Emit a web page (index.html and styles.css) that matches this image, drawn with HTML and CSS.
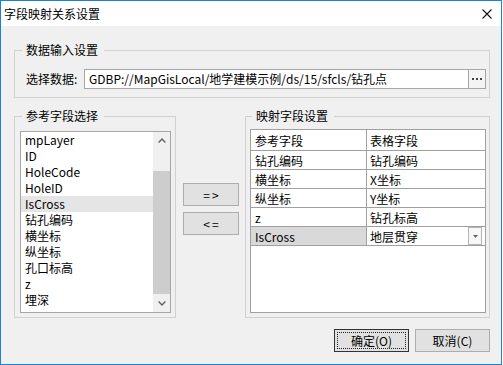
FILE: index.html
```html
<!DOCTYPE html>
<html lang="zh-CN">
<head>
<meta charset="utf-8">
<title>字段映射关系设置</title>
<link rel="stylesheet" href="styles.css">
</head>
<body>
<div class="window">
  <div class="titlebar">
    <span class="title">字段映射关系设置</span>
    <svg class="close" width="10" height="10" viewBox="0 0 10 10"><path d="M0.5 0.5L9.5 9.5M9.5 0.5L0.5 9.5" stroke="#111" stroke-width="1.1" fill="none"/></svg>
  </div>
  <div class="content">
    <fieldset class="group group-input">
      <legend>数据输入设置</legend>
      <div class="input-row">
        <span class="label">选择数据:</span>
        <div class="textbox">
          <span class="path">GDBP://MapGisLocal/地学建模示例/ds/15/sfcls/钻孔点</span>
          <span class="browse"><svg width="16" height="18" viewBox="0 0 16 18"><rect x="3" y="8" width="2" height="2" fill="#444"/><rect x="7" y="8" width="2" height="2" fill="#444"/><rect x="11" y="8" width="2" height="2" fill="#444"/></svg></span>
        </div>
      </div>
    </fieldset>
    <div class="main-row">
      <fieldset class="group group-ref">
        <legend>参考字段选择</legend>
        <div class="listbox">
          <ul class="items">
            <li>mpLayer</li>
            <li>ID</li>
            <li>HoleCode</li>
            <li>HoleID</li>
            <li class="selected">IsCross</li>
            <li>钻孔编码</li>
            <li>横坐标</li>
            <li>纵坐标</li>
            <li>孔口标高</li>
            <li>z</li>
            <li>埋深</li>
          </ul>
          <div class="scrollbar">
            <div class="sb-btn"><svg width="8" height="5" viewBox="0 0 8 5"><polyline points="0.6,4.4 4,1 7.4,4.4" fill="none" stroke="#606060" stroke-width="1.4"/></svg></div>
            <div class="sb-track"></div>
            <div class="sb-thumb"></div>
            <div class="sb-track"></div>
            <div class="sb-btn"><svg width="8" height="5" viewBox="0 0 8 5"><polyline points="0.6,0.6 4,4 7.4,0.6" fill="none" stroke="#606060" stroke-width="1.4"/></svg></div>
          </div>
        </div>
      </fieldset>
      <div class="move-buttons">
        <button class="btn move">=&gt;</button>
        <button class="btn move">&lt;=</button>
      </div>
      <fieldset class="group group-map">
        <legend>映射字段设置</legend>
        <div class="grid">
          <div class="row header"><div class="cell left">参考字段</div><div class="cell right">表格字段</div></div>
          <div class="row"><div class="cell left">钻孔编码</div><div class="cell right">钻孔编码</div></div>
          <div class="row"><div class="cell left">横坐标</div><div class="cell right">X坐标</div></div>
          <div class="row"><div class="cell left">纵坐标</div><div class="cell right">Y坐标</div></div>
          <div class="row"><div class="cell left">z</div><div class="cell right">钻孔标高</div></div>
          <div class="row current"><div class="cell left">IsCross</div><div class="cell right"><span>地层贯穿</span><span class="dropdown"><svg width="5" height="3" viewBox="0 0 5 3"><polygon points="0,0 5,0 2.5,3" fill="#666"/></svg></span></div></div>
        </div>
      </fieldset>
    </div>
    <div class="actions">
      <button class="btn action default">确定(O)</button>
      <button class="btn action">取消(C)</button>
    </div>
  </div>
</div>
</body>
</html>
```
FILE: styles.css
```css
html, body {
  margin: 0;
  padding: 0;
  background: #ffffff;
}

body {
  font-family: "Noto Sans CJK SC", "Microsoft YaHei", sans-serif;
  font-size: 12px;
  color: #000;
}

.window {
  box-sizing: border-box;
  width: 502px;
  height: 365px;
  border: 1px solid #1883d7;
  display: flex;
  flex-direction: column;
  background: #f0f0f0;
}

.titlebar {
  height: 25px;
  background: #fff;
  display: flex;
  align-items: center;
  justify-content: space-between;
  padding: 0 9px 0 3px;
  flex: none;
}

.title {
  font-size: 12px;
  line-height: 25px;
}

.close {
  display: block;
  margin-top: 1px;
}

.content {
  flex: 1;
  padding: 0 11px 0 13px;
  display: flex;
  flex-direction: column;
}

.group {
  margin: 0;
  border: 1px solid #d0d0d0;
  min-inline-size: 0;
}

.group legend {
  margin-left: 2px;
  padding: 0 6px 0 4px;
  line-height: 16px;
  font-size: 12px;
}

.group-input {
  margin-top: 16px;
  padding: 11px 3px 8px 5px;
}

.input-row {
  display: flex;
  align-items: center;
  padding-left: 6px;
}

.label {
  width: 58px;
  flex: none;
  line-height: 20px;
}

.textbox {
  flex: 1;
  height: 20px;
  box-sizing: border-box;
  border: 1px solid #a6a6a6;
  background: #fff;
  display: flex;
  align-items: stretch;
}

.path {
  flex: 1;
  padding-left: 4px;
  line-height: 18px;
  white-space: nowrap;
}

.browse {
  width: 17px;
  box-sizing: border-box;
  border-left: 1px solid #a6a6a6;
  background: #f4f4f4;
  display: flex;
}

.main-row {
  margin-top: 10px;
  display: flex;
}

.group-ref {
  width: 162px;
  box-sizing: border-box;
  padding: 7px 4px 4px 5px;
}

.group-map {
  width: 245px;
  box-sizing: border-box;
  padding: 5px 3px 4px 4px;
}

.listbox {
  width: 151px;
  height: 182px;
  box-sizing: border-box;
  border: 1px solid #a6a6a6;
  background: #fff;
  display: flex;
}

.items {
  flex: 1;
  list-style: none;
  margin: 0;
  padding: 0;
}

.items li {
  height: 16px;
  line-height: 16px;
  padding-left: 4px;
  white-space: nowrap;
}

.items li.selected {
  background: #e5e5e5;
}

.scrollbar {
  width: 17px;
  display: grid;
  grid-template-rows: 17px 22px 123px 1fr 17px;
  background: #f0f0f0;
}

.sb-btn {
  display: flex;
  align-items: center;
  justify-content: center;
}

.sb-thumb {
  background: #cdcdcd;
}

.move-buttons {
  width: 69px;
  box-sizing: border-box;
  padding: 75px 0 0 7px;
  display: flex;
  flex-direction: column;
  gap: 6px;
}

.btn {
  font-family: inherit;
  font-size: 12px;
  color: #000;
  height: 23px;
  box-sizing: border-box;
  border: 1px solid #adadad;
  background: #e1e1e1;
  padding: 0;
  margin: 0;
  line-height: 21px;
}

.move {
  width: 56px;
  letter-spacing: 2px;
  text-indent: 2px;
}

.grid {
  width: 236px;
  height: 184px;
  box-sizing: border-box;
  border: 1px solid #a0a0a0;
  background: #fff;
}

.row {
  display: flex;
  height: 19px;
  box-sizing: border-box;
  border-bottom: 1px solid #a0a0a0;
}

.row.header {
  height: 21px;
}

.cell {
  box-sizing: border-box;
  display: flex;
  align-items: center;
  white-space: nowrap;
}

.cell.left {
  width: 116px;
  border-right: 1px solid #a0a0a0;
  padding-left: 4px;
}

.cell.right {
  width: 118px;
  padding-left: 3px;
  padding-right: 3px;
  justify-content: space-between;
}

.row.current .cell.left {
  background: #d9d9d9;
}

.dropdown {
  width: 14px;
  height: 18px;
  box-sizing: border-box;
  border: 1px solid #b4b4b4;
  background: #f7f7f7;
  display: flex;
  align-items: center;
  justify-content: center;
}

.actions {
  margin-top: 11px;
  display: flex;
  justify-content: flex-end;
  gap: 6px;
}

.action {
  width: 75px;
}

.action.default {
  border-color: #333;
  outline: 1px dotted #222;
  outline-offset: -4px;
}
```
